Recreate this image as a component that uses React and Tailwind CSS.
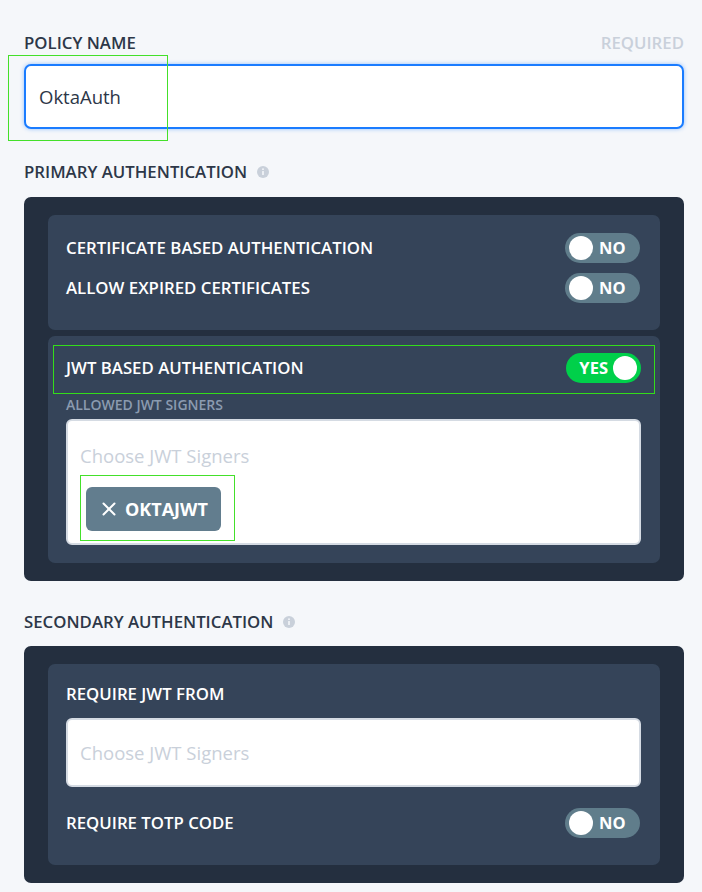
import { X } from "lucide-react";

const InfoIcon = () => (
    <svg width="12" height="12" viewBox="0 0 12 12" className="ml-[10px]">
        <circle cx="6" cy="6" r="6" fill="#c9d0da" />
        <rect x="5.2" y="5" width="1.6" height="4" rx="0.5" fill="#f5f7fa" />
        <circle cx="6" cy="3.2" r="0.9" fill="#f5f7fa" />
    </svg>
);

const Toggle = ({ on }) => {

    if (on) {

        return (
            <div className="flex items-center justify-end w-[75px] h-[30px] rounded-full bg-[#00d04a] pr-[4px]">
                <span className="text-white font-bold text-[16.5px] mr-[5px]">YES</span>
                <span className="w-[24px] h-[24px] rounded-full bg-white"></span>
            </div>
        )
    }

    return (
        <div className="flex items-center w-[75px] h-[30px] rounded-full bg-[#607d8b] pl-[4px]">
            <span className="w-[24px] h-[24px] rounded-full bg-white"></span>
            <span className="text-white font-bold text-[16.5px] ml-[6px]">NO</span>
        </div>
    )
}

const Row = ({ label, on }) => (
    <div className="flex items-center justify-between h-[30px]">
        <span className="text-white font-semibold text-[16.8px]">{label}</span>
        <Toggle on={on} />
    </div>
)

const SectionLabel = ({ children }) => (
    <div className="flex items-center h-[20px] text-[#2d3748] font-semibold text-[16.8px]">
        {children}
        <InfoIcon />
    </div>
)

const App = () => {

    return (

        <div className="relative w-[702px] h-[892px] bg-[#f5f7fa] pl-6 pr-[18px] pt-[30px] font-['Open_Sans',sans-serif]">

            <div className="flex justify-between h-[20px] text-[16.8px] font-semibold">
                <span className="text-[#2d3748]">POLICY NAME</span>
                <span className="text-[#c9d0da]">REQUIRED</span>
            </div>

            <div className="mt-[14px] h-[65px] bg-white border-2 border-[#1a7cff] rounded-[7px] shadow-[0_0_4px_rgba(26,124,255,0.45)] flex items-center pl-[13px] text-[18.5px] text-[#2d3748]">
                OktaAuth
            </div>

            <div className="mt-[33px]">
                <SectionLabel>PRIMARY AUTHENTICATION</SectionLabel>
            </div>

            <div className="mt-[15px] bg-[#242f3f] rounded-[7px] px-6 py-[18px] flex flex-col gap-[6px]">

                <div className="bg-[#354459] rounded-[7px] pl-[18px] pr-[20px] pt-[18px] pb-[27px] flex flex-col gap-[10px]">
                    <Row label="CERTIFICATE BASED AUTHENTICATION" on={false} />
                    <Row label="ALLOW EXPIRED CERTIFICATES" on={false} />
                </div>

                <div className="bg-[#354459] rounded-[7px] pl-[18px] pr-[19px] pt-[17px] pb-[18px]">
                    <Row label="JWT BASED AUTHENTICATION" on={true} />
                    <div className="mt-[13px] h-[16px] flex items-center text-[#8b9bb0] font-semibold text-[14px]">ALLOWED JWT SIGNERS</div>
                    <div className="mt-[7px] h-[126px] bg-white rounded-[6px] border-2 border-[#d5dbe3] pl-[12px] pt-[20px]">
                        <div className="h-[30px] flex items-center text-[18.5px] text-[#c9d0da]">Choose JWT Signers</div>
                        <div className="mt-[16px] ml-[6px] w-[135px] h-[44px] bg-[#627d8e] rounded-[6px] flex items-center pl-[12px] gap-[5px] text-white font-bold text-[18px]">
                            <X size={22} strokeWidth={2.2} />
                            OKTAJWT
                        </div>
                    </div>
                </div>

            </div>

            <div className="mt-[31px]">
                <SectionLabel>SECONDARY AUTHENTICATION</SectionLabel>
            </div>

            <div className="mt-[14px] bg-[#242f3f] rounded-[7px] px-6 py-[18px]">
                <div className="bg-[#354459] rounded-[7px] pl-[18px] pr-[20px] pt-[18px] pb-[27px]">
                    <div className="h-[24px] flex items-center text-white font-semibold text-[16.8px]">REQUIRE JWT FROM</div>
                    <div className="mt-[12px] mr-[-1px] h-[69px] bg-white rounded-[6px] border-2 border-[#d5dbe3] flex items-center pl-[12px] text-[18.5px] text-[#c9d0da]">
                        Choose JWT Signers
                    </div>
                    <div className="mt-[21px]">
                        <Row label="REQUIRE TOTP CODE" on={false} />
                    </div>
                </div>
            </div>

            <div className="absolute left-[8px] top-[55px] w-[160px] h-[86px] border border-[#44e02a]"></div>
            <div className="absolute left-[53px] top-[345px] w-[602px] h-[49px] border border-[#33dd1a]"></div>
            <div className="absolute left-[80px] top-[475px] w-[155px] h-[66px] border border-[#44e02a]"></div>

        </div>
    )
}

export default App;
